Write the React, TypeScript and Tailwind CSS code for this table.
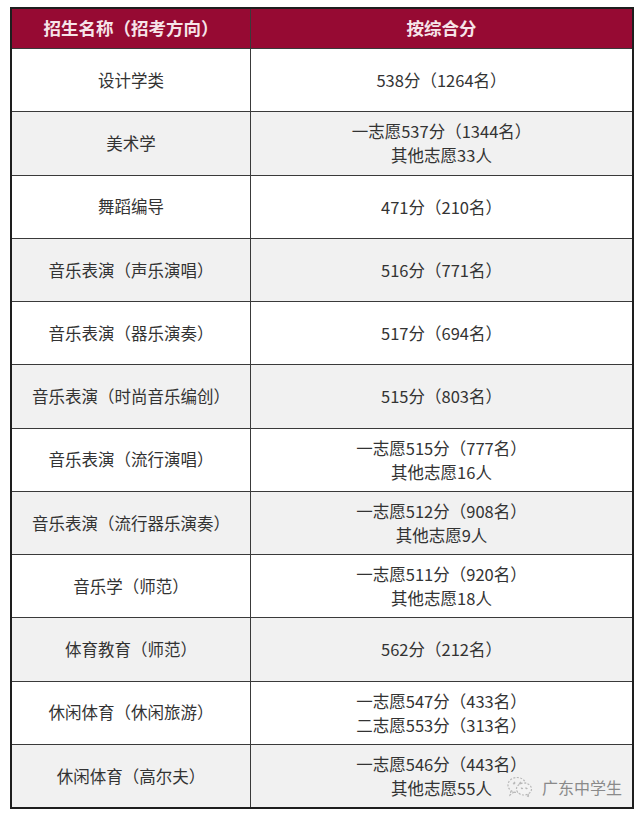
const ROWS: { name: string; score: string[] }[] = [
  { name: "设计学类", score: ["538分（1264名）"] },
  { name: "美术学", score: ["一志愿537分（1344名）", "其他志愿33人"] },
  { name: "舞蹈编导", score: ["471分（210名）"] },
  { name: "音乐表演（声乐演唱）", score: ["516分（771名）"] },
  { name: "音乐表演（器乐演奏）", score: ["517分（694名）"] },
  { name: "音乐表演（时尚音乐编创）", score: ["515分（803名）"] },
  { name: "音乐表演（流行演唱）", score: ["一志愿515分（777名）", "其他志愿16人"] },
  { name: "音乐表演（流行器乐演奏）", score: ["一志愿512分（908名）", "其他志愿9人"] },
  { name: "音乐学（师范）", score: ["一志愿511分（920名）", "其他志愿18人"] },
  { name: "体育教育（师范）", score: ["562分（212名）"] },
  { name: "休闲体育（休闲旅游）", score: ["一志愿547分（433名）", "二志愿553分（313名）"] },
  { name: "休闲体育（高尔夫）", score: ["一志愿546分（443名）", "其他志愿55人"] },
];

function WechatMark() {
  return (
    <svg width="28" height="24" viewBox="0 0 28 24" fill="none" stroke="#b8b8b8" strokeWidth="1.2" strokeDasharray="2 1.5">
      <ellipse cx="11" cy="10" rx="9" ry="7.5" />
      <path d="M5 16 L4 20 L8 17" />
      <ellipse cx="18" cy="14" rx="7.5" ry="6" fill="#f3f3f3" />
      <path d="M22 19 L23 22 L20 20" />
      <circle cx="8" cy="8" r="0.8" fill="#b8b8b8" />
      <circle cx="14" cy="8" r="0.8" fill="#b8b8b8" />
      <circle cx="16" cy="13" r="0.6" fill="#b8b8b8" />
      <circle cx="20.5" cy="13" r="0.6" fill="#b8b8b8" />
    </svg>
  );
}

export default function App() {
  return (
    <div
      className="w-[640px] h-[817px] bg-white pt-[7px] pl-[10px]"
      style={{ fontFamily: '"Noto Sans CJK SC", "Noto Sans", sans-serif' }}
    >
      <div className="relative w-[624px] h-[802px] border-2 border-[#1e1e1e] bg-[#3a3a3a] grid grid-cols-[238px_1fr] grid-rows-[39px_repeat(12,1fr)] gap-px">
        <div className="bg-[#960a33] flex items-center justify-center text-[17.5px] font-bold text-[#f6e4e9]">
          招生名称（招考方向）
        </div>
        <div className="bg-[#960a33] flex items-center justify-center text-[17.5px] font-bold text-[#f6e4e9]">
          按综合分
        </div>
        {ROWS.map((row, i) => {
          const bg = i % 2 === 0 ? "bg-white" : "bg-[#f1f1f1]";
          return [
            <div key={row.name} className={`${bg} flex items-center justify-center text-[16.5px] text-[#333]`}>
              {row.name}
            </div>,
            <div key={row.name + "-s"} className={`${bg} flex flex-col items-center justify-center text-[16.5px] leading-6 text-[#333]`}>
              {row.score.map((s) => (
                <span key={s}>{s}</span>
              ))}
            </div>,
          ];
        })}
        <div className="absolute right-[10px] bottom-[8px] flex items-center gap-[8px]">
          <WechatMark />
          <span className="text-[16px] text-[#8a8a8a]">广东中学生</span>
        </div>
      </div>
    </div>
  );
}
